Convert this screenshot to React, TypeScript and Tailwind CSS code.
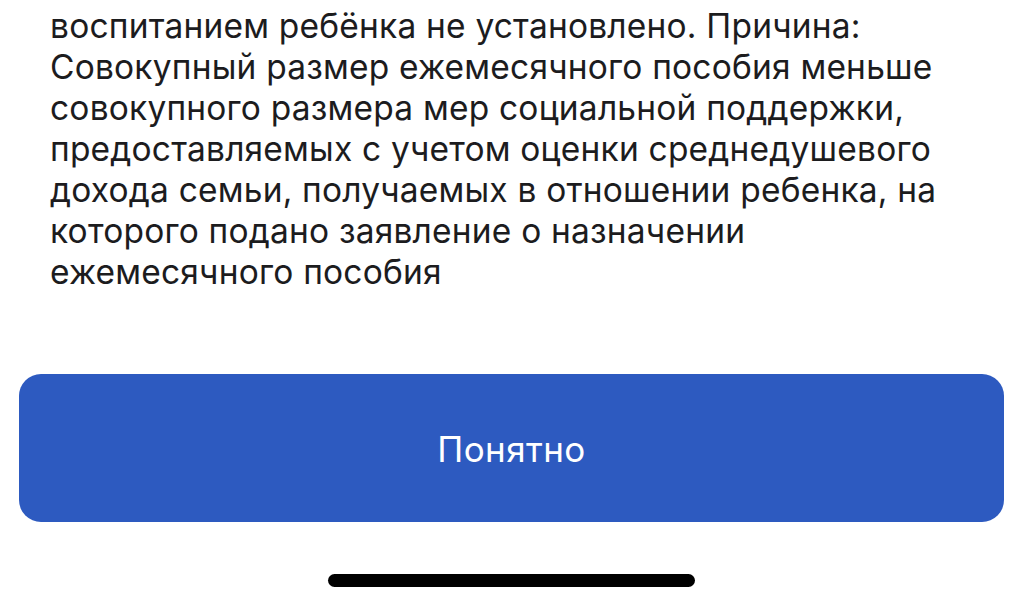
const lines = [
  "воспитанием ребёнка не установлено. Причина:",
  "Совокупный размер ежемесячного пособия меньше",
  "совокупного размера мер социальной поддержки,",
  "предоставляемых с учетом оценки среднедушевого",
  "дохода семьи, получаемых в отношении ребенка, на",
  "которого подано заявление о назначении",
  "ежемесячного пособия",
];

export default function App() {
  return (
    <div
      className="flex h-[600px] w-[1023px] flex-col overflow-hidden bg-white"
      style={{ fontFamily: "Inter, 'Liberation Sans', sans-serif" }}
    >
      <div className="mt-[6px] px-[50px] text-[33.5px] leading-[41px] tracking-[0.2px] text-[#1c1c1e]">
        {lines.map((line) => (
          <div key={line} className="whitespace-nowrap">
            {line}
          </div>
        ))}
      </div>

      <div className="mt-[81px] px-[19px]">
        <button
          type="button"
          className="flex h-[148px] w-full items-center justify-center rounded-[22px] bg-[#2d5ac0] pt-[2px] text-[35px] tracking-[0.4px] text-white"
        >
          Понятно
        </button>
      </div>

      <div className="mt-[52px] flex justify-center">
        <div className="h-[13px] w-[367px] rounded-full bg-black" />
      </div>
    </div>
  );
}
